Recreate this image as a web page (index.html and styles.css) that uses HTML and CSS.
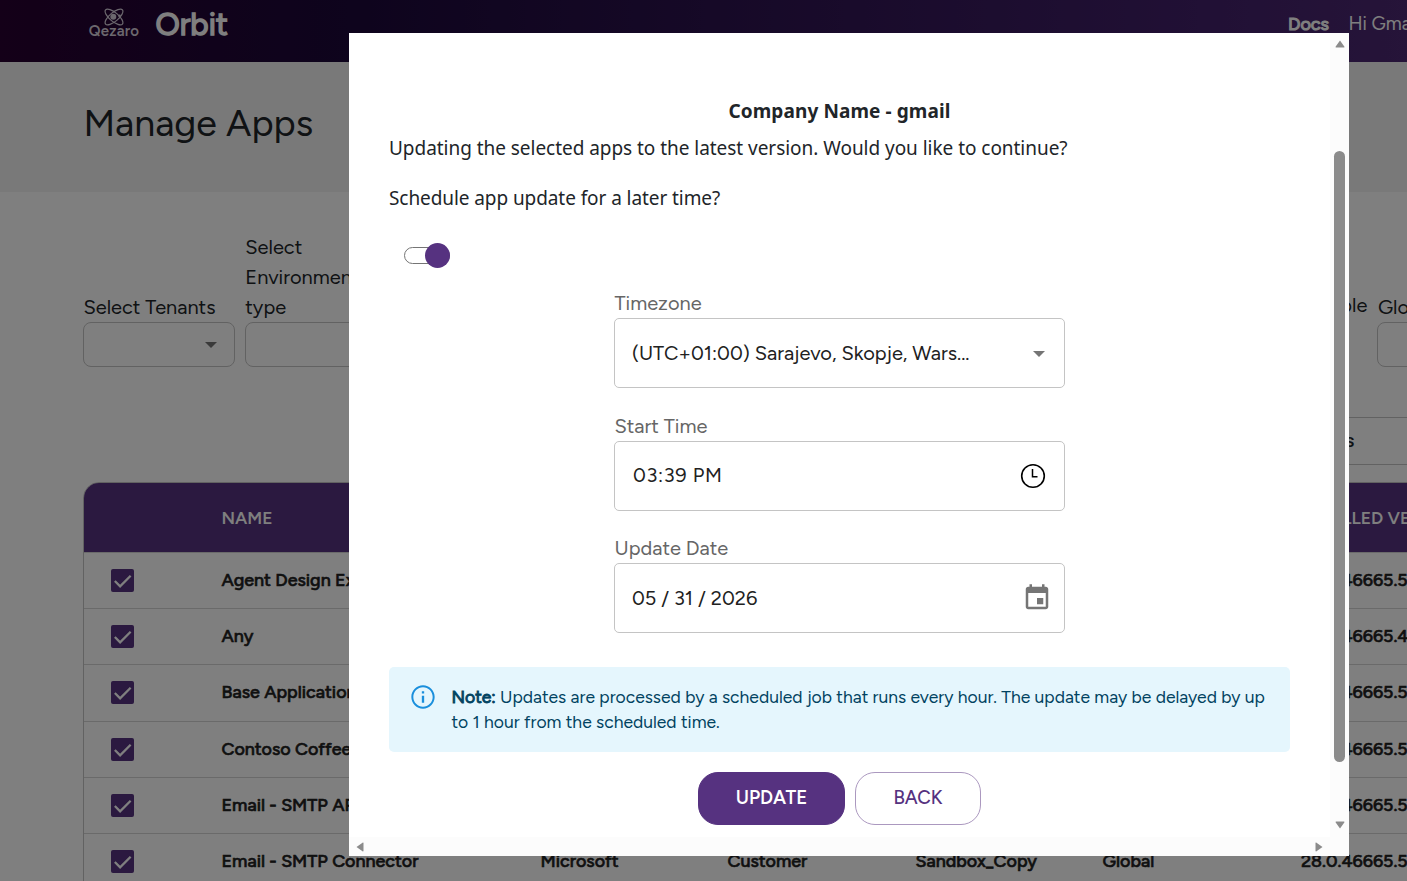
FILE: index.html
```html
<!DOCTYPE html>
<html lang="en">
<head>
    <meta charset="UTF-8">
    <meta name="viewport" content="width=device-width, initial-scale=1.0">
    <title>Manage Apps</title>
    <link rel="stylesheet" href="styles.css">
</head>
<body>

    <div class="page">
        <header class="navbar">
            <div class="logo">
                <svg class="logo-icon" width="20" height="18" viewBox="0 0 20 18" fill="none" stroke="currentColor" stroke-width="1.2">
                    <ellipse cx="10" cy="9" rx="11" ry="4.4" transform="rotate(40 10 9)"/>
                    <ellipse cx="10" cy="9" rx="11" ry="4.4" transform="rotate(-40 10 9)"/>
                    <circle cx="9.3" cy="8.7" r="3" fill="currentColor" stroke="none"/>
                    <circle cx="15.5" cy="7.8" r="1.4" fill="currentColor" stroke="none"/>
                </svg>
                <span class="logo-name">Qezaro</span>
            </div>
            <span class="product">Orbit</span>
            <nav class="nav-links">
                <a class="docs">Docs</a>
                <a class="user">Hi Gmail</a>
            </nav>
        </header>

        <div class="banner">
            <h1>Manage Apps</h1>
        </div>

        <main class="content">
            <div class="filters">
                <div class="filter">
                    <label>Select Tenants</label>
                    <div class="filter-select"><span class="caret"></span></div>
                </div>
                <div class="filter">
                    <label>Select Environment type</label>
                    <div class="filter-select"><span class="caret"></span></div>
                </div>
                <div class="filter available"><label>Available</label></div>
                <div class="filter">
                    <label>Global</label>
                    <div class="filter-select"></div>
                </div>
            </div>

            <div class="toolbar">
                <div class="search">Search apps</div>
            </div>

            <div class="table">
                <div class="row head">
                    <span></span><span>NAME</span><span></span><span></span><span></span><span></span><span class="version">INSTALLED VERSION</span>
                </div>
                <div class="row">
                    <span class="check"><svg viewBox="0 0 24 24"><path d="M4 12.5l5.5 5.5L20.5 7"/></svg></span>
                    <span>Agent Design Experience</span><span></span><span></span><span></span><span></span><span>28.0.46665.50</span>
                </div>
                <div class="row">
                    <span class="check"><svg viewBox="0 0 24 24"><path d="M4 12.5l5.5 5.5L20.5 7"/></svg></span>
                    <span>Any</span><span></span><span></span><span></span><span></span><span>28.0.46665.40</span>
                </div>
                <div class="row">
                    <span class="check"><svg viewBox="0 0 24 24"><path d="M4 12.5l5.5 5.5L20.5 7"/></svg></span>
                    <span>Base Application</span><span></span><span></span><span></span><span></span><span>28.0.46665.50</span>
                </div>
                <div class="row">
                    <span class="check"><svg viewBox="0 0 24 24"><path d="M4 12.5l5.5 5.5L20.5 7"/></svg></span>
                    <span>Contoso Coffee</span><span></span><span></span><span></span><span></span><span>28.0.46665.50</span>
                </div>
                <div class="row">
                    <span class="check"><svg viewBox="0 0 24 24"><path d="M4 12.5l5.5 5.5L20.5 7"/></svg></span>
                    <span>Email - SMTP API</span><span></span><span></span><span></span><span></span><span>28.0.46665.50</span>
                </div>
                <div class="row">
                    <span class="check"><svg viewBox="0 0 24 24"><path d="M4 12.5l5.5 5.5L20.5 7"/></svg></span>
                    <span>Email - SMTP Connector</span><span>Microsoft</span><span>Customer</span><span>Sandbox_Copy</span><span>Global</span><span>28.0.46665.50</span>
                </div>
            </div>
        </main>
    </div>

    <div class="overlay">
        <div class="modal">
            <div class="modal-body">
                <h2>Company Name - gmail</h2>
                <p class="question">Updating the selected apps to the latest version. Would you like to continue?</p>
                <p class="question schedule">Schedule app update for a later time?</p>
                <div class="switch"><span class="thumb"></span></div>

                <div class="form">
                    <label>Timezone</label>
                    <div class="field">
                        <span>(UTC+01:00) Sarajevo, Skopje, Wars...</span>
                        <span class="caret"></span>
                    </div>
                    <label>Start Time</label>
                    <div class="field time-field">
                        <span class="time">03:39 PM</span>
                        <svg width="26" height="26" viewBox="0 0 26 26" fill="none" stroke="#000">
                            <circle cx="13" cy="13" r="11.3" stroke-width="1.6"/>
                            <path d="M12.5 6v7.7h5" stroke-width="1.5"/>
                        </svg>
                    </div>
                    <label>Update Date</label>
                    <div class="field date-field">
                        <span>05 / 31 / 2026</span>
                        <svg width="30" height="30" viewBox="0 0 24 24" fill="#757575">
                            <path d="M17 12h-5v5h5v-5zM16 1v2H8V1H6v2H5c-1.11 0-1.99.9-1.99 2L3 19c0 1.1.89 2 2 2h14c1.1 0 2-.9 2-2V5c0-1.1-.9-2-2-2h-1V1h-2zm3 18H5V8h14v11z"/>
                        </svg>
                    </div>
                </div>

                <div class="alert">
                    <svg width="28" height="28" viewBox="0 0 24 24" fill="#1a8fdc">
                        <path d="M11 7h2v2h-2zM11 11h2v6h-2zM12 2C6.48 2 2 6.48 2 12s4.48 10 10 10 10-4.48 10-10S17.52 2 12 2zm0 18.3c-4.6 0-8.3-3.7-8.3-8.3S7.4 3.7 12 3.7s8.3 3.7 8.3 8.3-3.7 8.3-8.3 8.3z"/>
                    </svg>
                    <p><b>Note:</b> Updates are processed by a scheduled job that runs every hour. The update may be delayed by up<br>to 1 hour from the scheduled time.</p>
                </div>

                <div class="buttons">
                    <button class="btn update">UPDATE</button>
                    <button class="btn back">BACK</button>
                </div>
            </div>
            <div class="scroll-y">
                <svg width="10" height="8" viewBox="0 0 10 8"><path d="M5 .5L9.3 6.5a.6.6 0 0 1-.5 1H1.2a.6.6 0 0 1-.5-1z"/></svg>
                <span class="scroll-thumb"></span>
                <svg width="10" height="8" viewBox="0 0 10 8"><path d="M5 7.5L9.3 1.5a.6.6 0 0 0-.5-1H1.2a.6.6 0 0 0-.5 1z"/></svg>
            </div>
            <div class="scroll-x">
                <svg width="8" height="10" viewBox="0 0 8 10"><path d="M.5 5L6.5.7a.6.6 0 0 1 1 .5v7.6a.6.6 0 0 1-1 .5z"/></svg>
                <svg width="8" height="10" viewBox="0 0 8 10"><path d="M7.5 5L1.5.7a.6.6 0 0 0-1 .5v7.6a.6.6 0 0 0 1 .5z"/></svg>
            </div>
        </div>
    </div>

</body>
</html>
```

FILE: styles.css
```css
* {
    box-sizing: border-box;
}

body {
    font-family: Figtree, Lato, sans-serif;
    font-size: 20px;
    line-height: 30px;
    color: #212529;
    background-color: #fff;
    margin: 0;
    height: 881px;
    overflow: hidden;
}

h1, h2, p {
    margin: 0;
}

.page {
    width: 1698px;
    height: 881px;
    overflow: hidden;
}

/* Header */
.navbar {
    display: flex;
    height: 62px;
    padding-left: 89px;
    background: linear-gradient(90deg, #280030 0, #1c083a 350px, #42206a 1200px, #4c2872 1407px);
    color: #fff;
}

.logo {
    display: flex;
    flex-direction: column;
    align-items: center;
    width: 50px;
    padding-top: 8px;
    color: #d8d0dc;
}

.logo-name {
    margin-top: -2px;
    font-size: 15px;
    line-height: 15px;
    font-weight: 600;
    letter-spacing: 0.2px;
}

.product {
    width: 100px;
    margin-left: 16.5px;
    padding-top: 8px;
    font-size: 31.25px;
    line-height: 32px;
    -webkit-text-stroke: 1.5px #fff;
}

.nav-links {
    display: flex;
    margin-left: 1032.5px;
    padding-top: 9px;
    font-size: 18.75px;
    white-space: nowrap;
}

.docs {
    width: 60.5px;
    font-size: 18px;
    -webkit-text-stroke: 1.1px #fff;
}

.banner {
    height: 130px;
    padding: 38px 83.4px;
    background-color: #f2f2f2;
}

h1 {
    font-size: 37.5px;
    line-height: 46px;
    font-weight: normal;
}

/* Filters */
.content {
    padding: 40px 83px 0;
}

.filters {
    display: grid;
    grid-template-columns: repeat(9, 151.8px);
    column-gap: 10px;
    align-items: end;
    height: 135px;
}

.filter label {
    display: block;
    padding-left: 0.5px;
}

.filter-select {
    display: flex;
    align-items: center;
    justify-content: flex-end;
    height: 45px;
    padding-right: 17px;
    border: 1px solid #c4c4c4;
    border-radius: 8px;
}

.available {
    grid-column: 8;
    padding-bottom: 47px;
    text-align: right;
}

.caret {
    margin-top: 1px;
    border: 6.5px solid transparent;
    border-top-color: #757575;
    border-bottom: 0;
}

.toolbar {
    display: flex;
    justify-content: flex-end;
    padding-top: 50px;
}

.search {
    width: 375px;
    height: 48px;
    padding: 8px 0 0 14px;
    border: 1px solid #c4c4c4;
    font-family: Roboto, sans-serif;
    font-size: 18px;
    font-weight: 500;
}

/* Apps table */
.table {
    margin-top: 17px;
    border: 1px solid #c4c4c4;
    border-radius: 16px 16px 0 0;
    overflow: hidden;
}

.row {
    display: grid;
    grid-template-columns: 137.5px 319px 187px 188px 187px 198.5px 1fr;
    align-items: center;
    height: 56.2px;
    padding-bottom: 1px;
    border-top: 1px solid #d4d4d4;
    font-size: 17.9px;
    font-weight: 500;
    color: #212121;
    -webkit-text-stroke: 0.6px #212121;
    white-space: nowrap;
}

.row.head {
    height: 69px;
    padding-bottom: 0;
    border-top: 0;
    background-color: #563280;
    color: #fff;
    font-size: 17.5px;
    font-weight: 600;
    -webkit-text-stroke: 0;
}

.version {
    margin-left: -9px;
}

.check {
    width: 23px;
    height: 23px;
    margin: 1px 0 0 27px;
    border-radius: 2px;
    background-color: #563280;
}

.check svg {
    display: block;
    fill: none;
    stroke: #fff;
    stroke-width: 2.4;
}

/* Modal */
.overlay {
    position: fixed;
    inset: 0;
    padding: 33px 0 0 349px;
    background-color: rgba(0, 0, 0, 0.5);
}

.modal {
    display: grid;
    grid-template-columns: 981px 19px;
    grid-template-rows: 804px 19px;
    width: 1000px;
    background-color: #fcfcfc;
}

.modal-body {
    padding: 63px 40px 0;
    background-color: #fff;
}

h2, .question {
    font-family: "Segoe UI", "Noto Sans", sans-serif;
    font-size: 19px;
    line-height: 30px;
}

h2 {
    letter-spacing: 0.1px;
    text-align: center;
}

.question {
    margin-top: 7px;
    letter-spacing: -0.04px;
    white-space: nowrap;
}

.question.schedule {
    margin-top: 20px;
    letter-spacing: -0.08px;
}

.switch {
    display: flex;
    align-items: center;
    justify-content: flex-end;
    width: 46px;
    height: 17px;
    margin: 34px 0 0 15px;
    border: 1px solid #757575;
    border-radius: 9px;
}

.thumb {
    flex: none;
    width: 25px;
    height: 25px;
    margin-right: -1px;
    border-radius: 50%;
    background-color: #563280;
}

.form {
    width: 451px;
    margin: 24px auto 0;
}

.form label {
    display: block;
    padding-left: 0.5px;
    color: #666;
}

.field {
    display: flex;
    align-items: center;
    justify-content: space-between;
    height: 70px;
    margin-bottom: 23px;
    padding: 0 19px 0 17px;
    border: 1px solid #c4c4c4;
    border-radius: 5px;
    color: #212121;
    white-space: nowrap;
}

.time-field {
    margin-bottom: 22px;
    padding: 0 18px;
}

.time {
    padding-bottom: 2px;
    letter-spacing: 0.65px;
}

.date-field {
    margin-bottom: 0;
    padding-right: 12px;
}

.alert {
    display: flex;
    gap: 14.5px;
    height: 85px;
    margin-top: 34px;
    padding: 16px 20px;
    border-radius: 5px;
    background-color: #e5f6fd;
    color: #014361;
    font-size: 17.5px;
    line-height: 25px;
    white-space: nowrap;
}

.alert svg {
    flex: none;
}

.alert p {
    padding-top: 1px;
}

.alert b {
    font-weight: normal;
    -webkit-text-stroke: 0.9px #014361;
}

.buttons {
    display: flex;
    justify-content: center;
    gap: 10px;
    margin-top: 20px;
}

.btn {
    height: 53px;
    padding-bottom: 3px;
    border: 1px solid #563280;
    border-radius: 20px;
    background-color: #563280;
    color: #fff;
    font-family: inherit;
    font-size: 18.75px;
    font-weight: 600;
}

.update {
    width: 147px;
}

.back {
    width: 126px;
    border-color: #ab98bf;
    background-color: #fff;
    color: #563280;
    font-weight: 500;
}

/* Scrollbars */
.scroll-y {
    display: flex;
    flex-direction: column;
    align-items: center;
    padding: 7px 0 8px;
    fill: #8b8b8b;
}

.scroll-thumb {
    width: 11px;
    height: 611px;
    margin: 103px 0 auto;
    border-radius: 6px;
    background-color: #8b8b8b;
}

.scroll-x {
    display: flex;
    align-items: center;
    justify-content: space-between;
    padding: 0 7px;
    fill: #8b8b8b;
}
```
